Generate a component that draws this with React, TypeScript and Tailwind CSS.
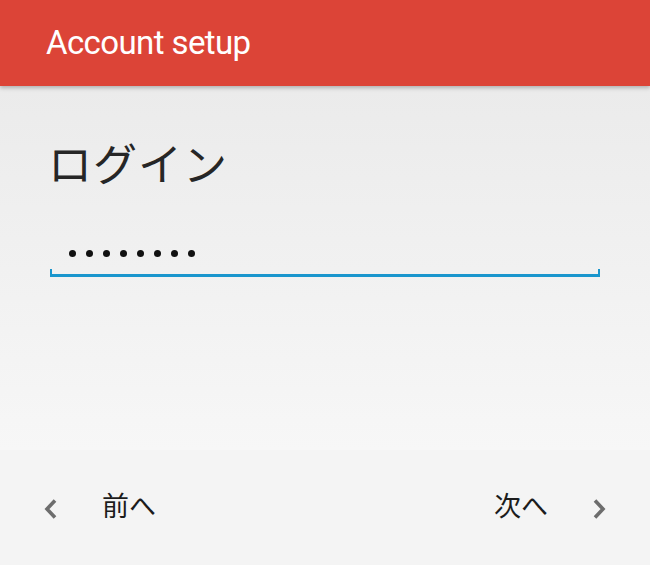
export default function App() {
  const font = { fontFamily: 'Roboto, "Noto Sans CJK JP", sans-serif' };
  return (
    <div className="w-[650px] h-[565px] flex flex-col overflow-hidden" style={font}>
      {/* App bar */}
      <header className="h-[86px] bg-[#dc4437] flex items-center px-[46px] shadow-[0_2px_4px_rgba(0,0,0,0.25)] z-10 shrink-0">
        <h1 className="text-white text-[33px] font-normal tracking-[-0.6px] leading-none -mt-[2px]">Account setup</h1>
      </header>

      {/* Content */}
      <main className="flex-1 bg-gradient-to-b from-[#ebebeb] to-[#f7f7f7] px-[48px] pt-[58px]">
        <h2 className="text-[44px] leading-none text-[#262626] tracking-[1px]">ログイン</h2>
        <div className="mt-[50px]">
          <div className="flex gap-[10px] pl-[21px] h-[30px] items-center">
            {Array.from({ length: 8 }).map((_, i) => (
              <span key={i} className="w-[7px] h-[7px] rounded-full bg-[#111]" />
            ))}
          </div>
          <div className="ml-[2px] w-[550px] h-[8px] border-x-2 border-b-[3px] border-[#1a96cd] mt-[1px]" />
        </div>
      </main>

      {/* Bottom nav */}
      <footer className="h-[115px] bg-[#f4f4f4] flex items-center justify-between pl-[42px] pr-[42px] shrink-0">
        <div className="flex items-center gap-[42px]">
          <svg width="18" height="24" viewBox="0 0 18 24" className="mt-[2px]">
            <path d="M13 3.5 L5 12 L13 20.5" fill="none" stroke="#6d6d6d" strokeWidth="3.6" />
          </svg>
          <span className="text-[27px] text-[#1c1c1c] leading-none">前へ</span>
        </div>
        <div className="flex items-center gap-[42px]">
          <span className="text-[27px] text-[#1c1c1c] leading-none">次へ</span>
          <svg width="18" height="24" viewBox="0 0 18 24" className="mt-[2px]">
            <path d="M5 3.5 L13 12 L5 20.5" fill="none" stroke="#6d6d6d" strokeWidth="3.6" />
          </svg>
        </div>
      </footer>
    </div>
  );
}
